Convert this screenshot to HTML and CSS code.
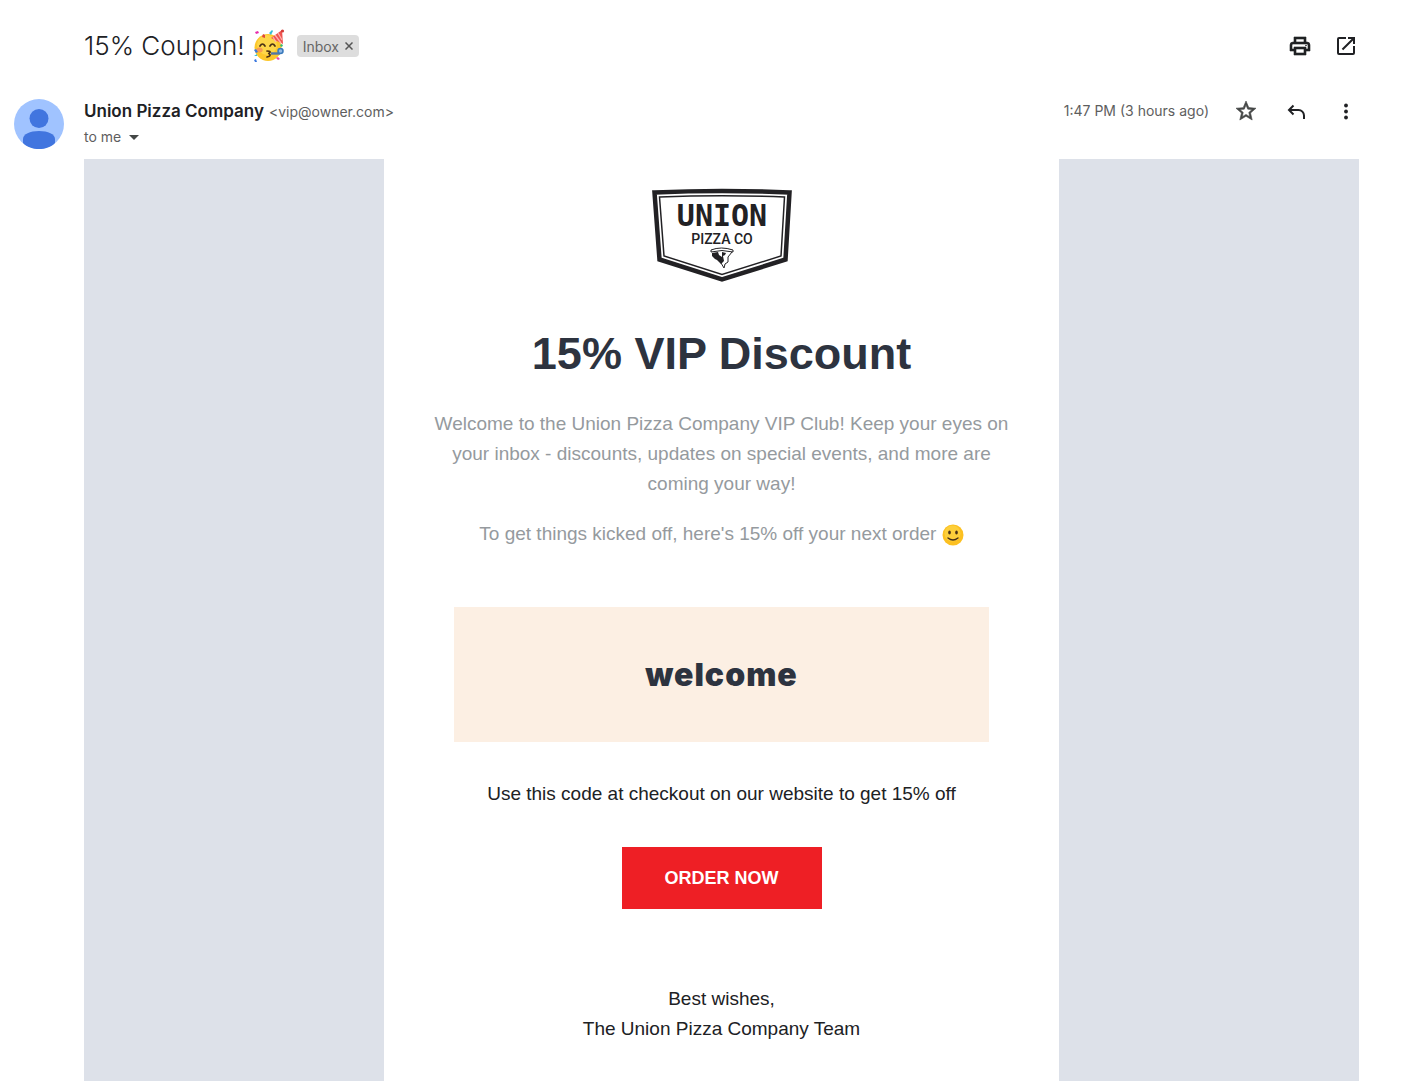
FILE: index.html
```html
<!DOCTYPE html>
<html lang="en">
<head>
    <meta charset="UTF-8">
    <meta name="viewport" content="width=device-width, initial-scale=1.0">
    <title>15% Coupon!</title>
    <link rel="stylesheet" href="styles.css">
</head>
<body>

    <header class="subject-bar">
        <h1 class="subject">15% Coupon!</h1>
        <svg class="party-face" viewBox="0 0 32 34" role="img" aria-label="Party face">
            <circle cx="15" cy="18.500" r="13.500" fill="#fcc72b"/>
            <circle cx="14" cy="16" r="10" fill="#fdd649"/>
            <ellipse cx="6.500" cy="21" rx="3.200" ry="2.500" fill="#f79a55"/>
            <path d="M18 9 29 1 30 15Z" fill="#ef5350"/>
            <path d="m22 6 6 8M25 4l4 7M20 8l3 5" stroke="#ffb0aa" stroke-width="1.300"/>
            <circle cx="29.500" cy="2" r="1.600" fill="#d33c37"/>
            <path d="M7 17q2.500-4 5 0M17 17q2.500-4 5 0" fill="none" stroke="#493015" stroke-width="1.700" stroke-linecap="round"/>
            <path d="M14 22q5 0 2 2.500 3 2.500-2 3.500" fill="none" stroke="#493015" stroke-width="1.700" stroke-linecap="round"/>
            <path d="M18 24.500h9" stroke="#5277a8" stroke-width="2.400"/>
            <circle cx="27.500" cy="22" r="2.500" fill="#91b8e4" stroke="#3979bb" stroke-width="1.500"/>
            <path d="m2 3 3-1 1 2-3 1Z" fill="#e72cac"/>
            <path d="m16 4 3-3 1 1-2 4ZM1 27l3-2v2Z" fill="#33bfd5"/>
            <path d="m10 5 2 1v3l-3-1Z" fill="#df473d"/>
            <path d="m1 21 2-1 2 3-2 1ZM1 31l2-1 1 3H2Z" fill="#3c79df"/>
            <path d="m23 29 2-1 2 2-2 1Z" fill="#e946a4"/>
            <path d="m28 15 2 1-1 2-2-1Z" fill="#38b86b"/>
        </svg>
        <span class="label">Inbox
            <button class="label-remove" aria-label="Remove label Inbox">
                <svg viewBox="0 0 8 8"><path d="m0.500 0.500 7 7M7.500 0.500l-7 7"/></svg>
            </button>
        </span>
        <div class="subject-actions">
            <button class="icon-btn" aria-label="Print">
                <svg class="bold" viewBox="0 0 24 24"><path d="M18 8V3H6v5H5a3 3 0 0 0-3 3v6h4v4h12v-4h4v-6a3 3 0 0 0-3-3h-1ZM8 5h8v3H8V5Zm8 14H8v-4h8v4Zm4-4h-2v-2H6v2H4v-4a1 1 0 0 1 1-1h14a1 1 0 0 1 1 1v4Z"/><circle cx="18" cy="11.500" r="0.500"/></svg>
            </button>
            <button class="icon-btn" aria-label="Open in new window">
                <svg viewBox="0 0 24 24"><path d="M19 19H5V5h7V3H5a2 2 0 0 0-2 2v14a2 2 0 0 0 2 2h14a2 2 0 0 0 2-2v-7h-2v7ZM14 3v2h3.590l-9.830 9.830 1.410 1.410L19 6.410V10h2V3h-7Z"/></svg>
            </button>
        </div>
    </header>

    <main class="message">
        <svg class="avatar" viewBox="0 0 50 50" aria-hidden="true">
            <circle cx="25" cy="25" r="25" fill="#a0c3ff"/>
            <circle cx="25" cy="19.500" r="9.500" fill="#4175df"/>
            <path d="M9 44v-4c0-5 7-8 16-8s16 3 16 8v4c-4 4-10 6-16 6S13 48 9 44Z" fill="#4175df"/>
        </svg>

        <div class="message-main">
            <div class="sender-bar">
                <div class="sender">
                    <div class="sender-line">
                        <span class="sender-name">Union Pizza Company</span>
                        <span class="sender-mail">&lt;vip@owner.com&gt;</span>
                    </div>
                    <button class="recipient">to me
                        <svg viewBox="0 0 10 5"><path d="M0 0h10L5 5Z"/></svg>
                    </button>
                </div>
                <div class="sender-actions">
                    <span class="time">1:47 PM (3 hours ago)</span>
                    <button class="icon-btn" aria-label="Star">
                        <svg class="star bold" viewBox="0 0 24 24"><path d="m22 9.240-7.190-.620L12 2 9.190 8.630 2 9.240l5.460 4.730L5.820 21 12 17.270 18.180 21l-1.630-7.030L22 9.240ZM12 15.400l-3.760 2.270 1-4.280-3.320-2.880 4.380-.380L12 6.100l1.710 4.040 4.380.380-3.320 2.880 1 4.280L12 15.400Z"/></svg>
                    </button>
                    <button class="icon-btn" aria-label="Reply">
                        <svg viewBox="0 0 24 24"><path d="M9.500 6.500 5 11l4.500 4.500M5 11h9.500a5.500 5.500 0 0 1 5.500 5.500V20" fill="none" stroke="#202124" stroke-width="2"/></svg>
                    </button>
                    <button class="icon-btn" aria-label="More">
                        <svg viewBox="0 0 24 24"><circle cx="12" cy="6.500" r="1.900"/><circle cx="12" cy="12.500" r="1.900"/><circle cx="12" cy="18.500" r="1.900"/></svg>
                    </button>
                </div>
            </div>

            <div class="mail-bg">
                <article class="mail">
                    <svg class="logo" viewBox="0 0 142 94" role="img" aria-label="Union Pizza Co">
                        <path d="M3.500 4.500Q71 1.500 138.500 4.500L134.500 71.500 71 91.500 8.500 71.500Z" fill="#fff" stroke="#222124" stroke-width="4.500"/>
                        <path d="M8.500 9Q71 6.500 133.500 9L130 68 71 86.500 13 68Z" fill="none" stroke="#222124" stroke-width="1.500"/>
                        <text class="logo-name" x="71" y="38">UNION</text>
                        <text class="logo-sub" x="71" y="56">PIZZA CO</text>
                        <path d="M60 62q10-4 22 0v2q-11-3-22 0Z" fill="#fff" stroke="#222124"/>
                        <path d="m61 65 6-1 1 3 3 2V64l4 1-1 2-2 1 1 5-3 3-4-4-2-1-3-3Z" fill="#222124"/>
                        <path d="m81 64-4 5v5l-3 2-1 4-3-5" fill="none" stroke="#222124"/>
                    </svg>
                    <h2 class="mail-title">15% VIP Discount</h2>
                    <p class="intro">Welcome to the Union Pizza Company VIP Club! Keep your eyes on your inbox - discounts, updates on special events, and more are coming your way!</p>
                    <p class="intro">To get things kicked off, here's 15% off your next order
                        <svg class="smile" viewBox="0 0 22 22" role="img" aria-label="Smile">
                            <circle cx="11" cy="11" r="10.500" fill="#fcc021"/>
                            <circle cx="10.500" cy="9.500" r="8" fill="#fdcf3a"/>
                            <ellipse cx="7.500" cy="8.500" rx="1.300" ry="1.900" fill="#493015"/>
                            <ellipse cx="14.500" cy="8.500" rx="1.300" ry="1.900" fill="#493015"/>
                            <path d="M6 14q5 4 10 0" fill="none" stroke="#493015" stroke-width="1.400" stroke-linecap="round"/>
                        </svg>
                    </p>
                    <div class="coupon">welcome</div>
                    <p class="hint">Use this code at checkout on our website to get 15% off</p>
                    <button class="order-btn">ORDER NOW</button>
                    <p class="sign">Best wishes,<br>The Union Pizza Company Team</p>
                </article>
            </div>
        </div>
    </main>

</body>
</html>
```

FILE: styles.css
```css
* {
    box-sizing: border-box;
}

body {
    margin: 0;
    min-height: 100vh;
    display: flex;
    flex-direction: column;
    background: #fff;
    color: #202124;
    font-family: Inter, "Liberation Sans", sans-serif;
}

button {
    padding: 0;
    border: none;
    background: none;
    font-family: inherit;
    cursor: pointer;
}

h1, h2, p { margin: 0; }

svg { display: block; }

/* subject */
.subject-bar {
    display: flex;
    align-items: center;
    padding: 28px 60px 0 84px;
}

.subject {
    font-size: 26px;
    line-height: 36px;
    font-weight: 300;
}

.party-face {
    width: 32px;
    height: 34px;
    margin-left: 8px;
}

.label {
    display: flex;
    align-items: center;
    gap: 6px;
    height: 22px;
    margin-left: 12px;
    padding: 0 6px;
    border-radius: 4px;
    background: #ddd;
    color: #666;
    font-size: 14px;
}

.label-remove svg {
    width: 8px;
    height: 8px;
    stroke: #555;
    stroke-width: 1.5;
}

.subject-actions {
    display: flex;
    gap: 20px;
    margin-left: auto;
}

.icon-btn {
    display: flex;
    justify-content: center;
    width: 26px;
}

.icon-btn svg {
    width: 24px;
    height: 24px;
    fill: #202124;
}

.icon-btn .bold {
    stroke: #202124;
    stroke-width: 0.6;
}

.icon-btn .star {
    fill: #444746;
    stroke: #444746;
}

/* message */
.message {
    flex: 1;
    display: flex;
    align-items: flex-start;
    gap: 20px;
    padding: 35px 60px 0 14px;
}

.avatar {
    flex: none;
    width: 50px;
    height: 50px;
}

.message-main {
    flex: 1;
    align-self: stretch;
    display: flex;
    flex-direction: column;
}

.sender-bar {
    display: flex;
    justify-content: space-between;
    align-items: flex-start;
    height: 60px;
}

.sender-line {
    display: flex;
    align-items: baseline;
    gap: 5px;
    line-height: 24px;
}

.sender-name {
    font-size: 17px;
    font-weight: 600;
}

.sender-mail, .recipient, .time {
    color: #5e5e5e;
    font-size: 14px;
}

.recipient {
    display: flex;
    align-items: center;
    gap: 8px;
    line-height: 26px;
}

.recipient svg {
    width: 10px;
    height: 5px;
    fill: #444746;
}

.sender-actions {
    display: flex;
    align-items: center;
    gap: 24px;
    line-height: 24px;
}

/* mail body */
.mail-bg {
    flex: 1;
    display: flex;
    justify-content: center;
    background: #dde1e9;
}

.mail {
    width: 675px;
    display: flex;
    flex-direction: column;
    align-items: center;
    padding: 29px 50px 36px;
    background: #fff;
    font-family: "Liberation Sans", Arial, sans-serif;
    font-size: 19px;
    line-height: 30px;
    text-align: center;
}

.logo {
    width: 142px;
    height: 94px;
}

.logo-name, .logo-sub {
    fill: #222124;
    text-anchor: middle;
}

.logo-name {
    font-family: "DejaVu Sans Mono", monospace;
    font-size: 30px;
    font-weight: bold;
}

.logo-sub {
    font-family: Roboto, sans-serif;
    font-size: 14px;
    font-weight: 500;
}

.mail-title {
    margin: 46px 0 29px;
    color: #2d333f;
    font-size: 45px;
    line-height: 52px;
}

.intro {
    margin-bottom: 20px;
    color: #959a9e;
}

.smile {
    display: inline-block;
    width: 22px;
    height: 22px;
    vertical-align: -6px;
}

.coupon {
    width: 535px;
    margin: 38px 0 37px;
    padding: 50px 20px;
    background: #fcefe3;
    color: #2d333f;
    font-family: Inter, sans-serif;
    font-size: 32px;
    font-weight: 900;
    line-height: 35px;
    letter-spacing: 1px;
}

.order-btn {
    width: 200px;
    height: 62px;
    margin: 38px 0 75px;
    background: #ee1f25;
    color: #fff;
    font-size: 18px;
    font-weight: bold;
}
```
